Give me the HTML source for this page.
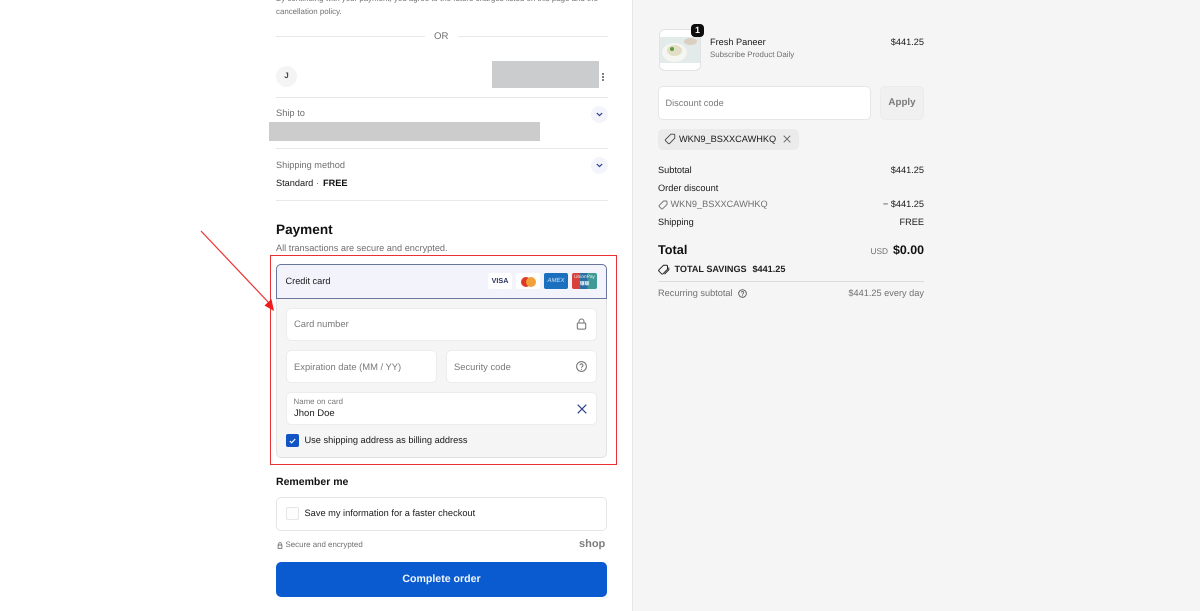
<!DOCTYPE html>
<html lang="en"><head><meta charset="utf-8"><title>Checkout</title>
<style>
html,body{margin:0;padding:0;background:#fff;width:1200px;height:611px;overflow:hidden}
body{position:relative;font-family:"Liberation Sans",sans-serif;color:#1a1a1a}
.t{position:absolute;white-space:nowrap;font-size:9.2px;line-height:14px;text-rendering:geometricPrecision}
.r{text-align:right}
.b{position:absolute;box-sizing:border-box}
.g{color:#707070}
.line{position:absolute;height:1px;background:#e8e8e8}
svg{position:absolute;overflow:visible}
#wrap{position:absolute;left:0;top:0;width:1200px;height:611px;filter:blur(.35px)}
</style></head><body>
<div id="wrap">
<div class="b" style="left:632px;top:0;width:568px;height:611px;background:#f5f5f5;border-left:1px solid #e6e6e6"></div>

<div class="t g" style="left:276px;top:-8px;font-size:7.9px">By continuing with your payment, you agree to the future charges listed on this page and the</div>
<div class="t g" style="left:276px;top:5px;font-size:7.9px">cancellation policy.</div>
<div class="line" style="left:276px;top:36px;width:149px"></div>
<div class="line" style="left:458px;top:36px;width:150px"></div>
<div class="t g" style="left:434px;top:30px;font-size:9.6px">OR</div>

<div class="b" style="left:276px;top:66px;width:21px;height:21px;border-radius:50%;background:#f4f4f4"></div>
<div class="t" style="left:276px;top:69px;width:21px;text-align:center;font-size:8px;font-weight:bold;color:#444">J</div>
<div class="b" style="left:492px;top:61px;width:107px;height:27px;background:#cbcccd"></div>
<div class="b" style="left:602px;top:73px;width:2px;height:2px;background:#555;border-radius:50%"></div>
<div class="b" style="left:602px;top:76px;width:2px;height:2px;background:#555;border-radius:50%"></div>
<div class="b" style="left:602px;top:79px;width:2px;height:2px;background:#555;border-radius:50%"></div>
<div class="line" style="left:276px;top:97px;width:332px"></div>

<div class="t g" style="left:276px;top:106px;font-size:9.3px">Ship to</div>
<div class="b" style="left:591px;top:106px;width:17px;height:17px;border-radius:50%;background:#f4f5fc"></div>
<svg style="left:596px;top:112px" width="7" height="5" viewBox="0 0 7 5"><path d="M.8 1l2.700 2.600L6.200 1" fill="none" stroke="#2c3e8c" stroke-width="1.200"/></svg>
<div class="b" style="left:269px;top:122px;width:271px;height:19px;background:#cccccc"></div>
<div class="line" style="left:276px;top:148px;width:332px"></div>

<div class="t g" style="left:276px;top:158px">Shipping method</div>
<div class="b" style="left:591px;top:157px;width:17px;height:17px;border-radius:50%;background:#f4f5fc"></div>
<svg style="left:596px;top:163px" width="7" height="5" viewBox="0 0 7 5"><path d="M.8 1l2.700 2.600L6.200 1" fill="none" stroke="#2c3e8c" stroke-width="1.200"/></svg>
<div class="t" style="left:276px;top:176px">Standard</div>
<div class="t g" style="left:316px;top:176px">·</div>
<div class="t" style="left:323px;top:176px;font-weight:bold;color:#111">FREE</div>
<div class="line" style="left:276px;top:200px;width:332px"></div>

<div class="t" style="left:276px;top:221px;font-size:13.6px;line-height:18px;font-weight:bold;color:#111">Payment</div>
<div class="t g" style="left:276px;top:241px">All transactions are secure and encrypted.</div>

<div class="b" style="left:276px;top:264px;width:331px;height:194px;border:1px solid #e2e2e2;border-radius:5px;background:#f5f5f5"></div>
<div class="b" style="left:276px;top:264px;width:331px;height:35px;border:1px solid #6a769c;border-radius:5px 5px 0 0;background:#f2f3fb"></div>
<div class="t" style="left:285.5px;top:274px">Credit card</div>

<div class="b" style="left:488px;top:273px;width:24px;height:16px;background:#fff;border-radius:2px"></div>
<div class="t" style="left:488px;top:275px;width:24px;text-align:center;font-size:7.2px;line-height:12px;font-weight:bold;color:#2a3560">VISA</div>
<div class="b" style="left:516px;top:273px;width:24px;height:16px;background:#fff;border-radius:2px"></div>
<div class="b" style="left:521px;top:276.5px;width:10px;height:10px;border-radius:50%;background:#dd3a26"></div>
<div class="b" style="left:526px;top:276.5px;width:10px;height:10px;border-radius:50%;background:#f2a03a"></div>
<div class="b" style="left:544px;top:273px;width:24px;height:16px;background:#1b6fbf;border-radius:2px"></div>
<div class="t" style="left:544px;top:275px;width:24px;text-align:center;font-size:6px;line-height:12px;font-style:italic;color:#cfe2f5">AMEX</div>
<div class="b" style="left:572px;top:273px;width:25px;height:16px;border-radius:2px;background:linear-gradient(90deg,#d6423b 0 33%,#2a6ea3 33% 62%,#3f9a97 62%)"></div>
<div class="t" style="left:572px;top:274.5px;width:25px;text-align:center;font-size:4.8px;line-height:6px;color:#e8f0f0">UnionPay<br><span style="font-family:'Noto Sans CJK SC',sans-serif;font-weight:bold;color:#fff">银联</span></div>

<div class="b" style="left:286px;top:308px;width:311px;height:33px;background:#fff;border:1px solid #ececec;border-radius:5px"></div>
<div class="t" style="left:294px;top:317px;color:#7a7a7a;font-size:9.4px">Card number</div>
<svg style="left:576px;top:318px" width="11" height="12" viewBox="0 0 11 12"><path d="M3 5V3.500a2.500 2.500 0 0 1 5 0V5M2.200 5h6.600a.9.9 0 0 1 .9.9v4a1.200 1.200 0 0 1-1.200 1.200H2.500a1.200 1.200 0 0 1-1.200-1.200v-4a.9.9 0 0 1 .9-.9z" fill="none" stroke="#707070" stroke-width="1"/></svg>

<div class="b" style="left:286px;top:350px;width:151px;height:33px;background:#fff;border:1px solid #ececec;border-radius:5px"></div>
<div class="t" style="left:294px;top:359.5px;color:#7a7a7a;font-size:9.4px">Expiration date (MM / YY)</div>
<div class="b" style="left:446px;top:350px;width:151px;height:33px;background:#fff;border:1px solid #ececec;border-radius:5px"></div>
<div class="t" style="left:454px;top:359.5px;color:#7a7a7a;font-size:9.4px">Security code</div>
<svg style="left:576px;top:361px" width="11" height="11" viewBox="0 0 11 11"><circle cx="5.500" cy="5.500" r="4.900" fill="none" stroke="#707070"/><path d="M4 4.300a1.500 1.500 0 1 1 2.300 1.300c-.5.300-.8.600-.8 1.200" fill="none" stroke="#707070"/><circle cx="5.500" cy="8.300" r=".6" fill="#707070"/></svg>

<div class="b" style="left:286px;top:392px;width:311px;height:33px;background:#fff;border:1px solid #ececec;border-radius:5px"></div>
<div class="t" style="left:293.500px;top:396px;font-size:7.900px;line-height:12px;color:#7a7a7a">Name on card</div>
<div class="t" style="left:294px;top:407px;font-size:9.500px">Jhon Doe</div>
<svg style="left:577px;top:404px" width="10" height="10" viewBox="0 0 10 10"><path d="M.7.7l8.600 8.600M9.300.7L.7 9.300" fill="none" stroke="#2c3e8c" stroke-width="1.100"/></svg>

<div class="b" style="left:286px;top:434px;width:13px;height:13px;border-radius:2px;background:#1354c4"></div>
<svg style="left:289px;top:438px" width="7" height="6" viewBox="0 0 7 6"><path d="M.8 3l1.800 1.800L6.200 1" fill="none" stroke="#fff" stroke-width="1.100"/></svg>
<div class="t" style="left:304.500px;top:433px;font-size:9.250px">Use shipping address as billing address</div>

<div class="b" style="left:270.250px;top:255.250px;width:346.500px;height:209.500px;border:1.500px solid #ea3035"></div>
<svg style="left:0;top:0" width="1200" height="611" viewBox="0 0 1200 611"><path d="M201 231L270 304" fill="none" stroke="#ee3030" stroke-width="1.200"/><path d="M274 311L264.500 305.500L271.500 299z" fill="#ee1c1c"/></svg>

<div class="t" style="left:276px;top:474.500px;font-size:10.500px;font-weight:bold;color:#111">Remember me</div>
<div class="b" style="left:276px;top:497px;width:331px;height:34px;background:#fff;border:1px solid #e6e6e6;border-radius:5px"></div>
<div class="b" style="left:286px;top:507px;width:13px;height:13px;background:#fdfdfd;border:1px solid #e6e6e6;border-radius:2px"></div>
<div class="t" style="left:304.500px;top:506px;font-size:9.250px">Save my information for a faster checkout</div>

<svg style="left:277px;top:542px" width="6" height="7" viewBox="0 0 6 8"><path d="M1.500 3.500V2.200a1.500 1.500 0 0 1 3 0v1.300M.8 3.500h4.400v3.700H.8z" fill="none" stroke="#666" stroke-width=".9"/></svg>
<div class="t g" style="left:285.500px;top:538px;font-size:7.900px">Secure and encrypted</div>
<div class="t" style="left:579px;top:537px;font-size:11px;font-weight:bold;color:#7d7d7d">shop</div>

<div class="b" style="left:276px;top:562px;width:331px;height:35px;background:#0a5bd0;border-radius:5px"></div>
<div class="t" style="left:276px;top:572px;width:331px;text-align:center;font-size:10.600px;font-weight:bold;color:#f2f6fd">Complete order</div>

<!-- right panel -->
<div class="b" style="left:659px;top:29px;width:42px;height:42px;border-radius:6px;background:#fff;border:1px solid #e3e3e3;overflow:hidden">
<div class="b" style="left:0;top:7px;width:40px;height:26px;background:#e2eaea"></div>
<div class="b" style="left:2px;top:13px;width:25px;height:19px;border-radius:50%;background:#f5f5f2"></div>
<div class="b" style="left:7px;top:15px;width:15px;height:11px;border-radius:50%;background:#e3dfc6"></div>
<div class="b" style="left:10px;top:17px;width:4px;height:4px;border-radius:50%;background:#5c9a3e"></div>
<div class="b" style="left:24px;top:8px;width:13px;height:7px;border-radius:50%;background:#dbd0c0"></div>
</div>
<div class="b" style="left:691px;top:24px;width:13px;height:13px;border-radius:4px;background:#0d0d0d"></div>
<div class="t" style="left:691px;top:24px;width:13px;text-align:center;font-size:9px;line-height:13px;font-weight:bold;color:#fff">1</div>
<div class="t" style="left:710px;top:35px">Fresh Paneer</div>
<div class="t g" style="left:710px;top:48px;font-size:7.900px">Subscribe Product Daily</div>
<div class="t r" style="right:276px;top:35px">$441.25</div>

<div class="b" style="left:658px;top:86px;width:213px;height:34px;background:#fff;border:1px solid #e6e6e6;border-radius:5px"></div>
<div class="t" style="left:665.500px;top:96px;color:#7a7a7a">Discount code</div>
<div class="b" style="left:880px;top:86px;width:44px;height:34px;background:#f0f0f0;border:1px solid #ebebeb;border-radius:5px"></div>
<div class="t" style="left:880px;top:96px;width:44px;text-align:center;font-weight:bold;color:#7a7a7a;font-size:9.800px">Apply</div>

<div class="b" style="left:658px;top:129px;width:141px;height:21px;background:#ebebeb;border-radius:5px"></div>
<svg style="left:664px;top:133px" width="12" height="12" viewBox="0 0 12 12"><path d="M6.800 1.200h3a1 1 0 0 1 1 1v3L5.600 10.400a1 1 0 0 1-1.400 0L1.600 7.800a1 1 0 0 1 0-1.400z" fill="none" stroke="#444" stroke-width=".9"/></svg>
<div class="t" style="left:679px;top:132px">WKN9_BSXXCAWHKQ</div>
<svg style="left:783px;top:135px" width="8" height="8" viewBox="0 0 8 8"><path d="M.7.7l6.600 6.600M7.300.7L.7 7.300" fill="none" stroke="#666" stroke-width="1"/></svg>

<div class="t" style="left:658px;top:163px">Subtotal</div>
<div class="t r" style="right:276px;top:163px">$441.25</div>
<div class="t" style="left:658px;top:181px">Order discount</div>
<svg style="left:658px;top:200px" width="10" height="10" viewBox="0 0 10 10"><path d="M5.600 1h2.600a.8.8 0 0 1 .8.800v2.600L4.600 8.800a.8.8 0 0 1-1.100 0L1.200 6.500a.8.8 0 0 1 0-1.100z" fill="none" stroke="#707070" stroke-width=".9"/></svg>
<div class="t g" style="left:670.500px;top:197px">WKN9_BSXXCAWHKQ</div>
<div class="t r" style="right:276px;top:197px">− $441.25</div>
<div class="t" style="left:658px;top:215px">Shipping</div>
<div class="t r" style="right:276px;top:215px">FREE</div>

<div class="t" style="left:658px;top:240.500px;font-size:12.700px;line-height:18px;font-weight:bold;color:#111">Total</div>
<div class="t g r" style="right:312px;top:244px;font-size:8.300px">USD</div>
<div class="t r" style="right:276px;top:240.500px;font-size:12.400px;line-height:18px;font-weight:bold;color:#111">$0.00</div>

<svg style="left:658px;top:264px" width="12" height="12" viewBox="0 0 12 12"><path d="M5.500 1.200h3a1 1 0 0 1 1 1v3L5 9.800a1 1 0 0 1-1.400 0L1 7.200a1 1 0 0 1 0-1.400zM10.800 3.500v2.300L6.500 10.200" fill="none" stroke="#222" stroke-width="1"/></svg>
<div class="t" style="left:674.500px;top:262px;font-weight:bold;color:#222;font-size:9.100px">TOTAL SAVINGS</div>
<div class="t" style="left:752.500px;top:262px;font-weight:bold;color:#222;font-size:9.100px">$441.25</div>
<div class="line" style="left:658px;top:281px;width:266px;background:#dcdcdc"></div>
<div class="t g" style="left:658px;top:286px">Recurring subtotal</div>
<svg style="left:738px;top:289px" width="9" height="9" viewBox="0 0 11 11"><circle cx="5.500" cy="5.500" r="4.700" fill="none" stroke="#555" stroke-width="1.100"/><path d="M4 4.300a1.500 1.500 0 1 1 2.300 1.300c-.5.300-.8.600-.8 1.200" fill="none" stroke="#555"/><circle cx="5.500" cy="8.300" r=".6" fill="#555"/></svg>
<div class="t g r" style="right:276px;top:286px">$441.25 every day</div>
</div>
</body></html>
